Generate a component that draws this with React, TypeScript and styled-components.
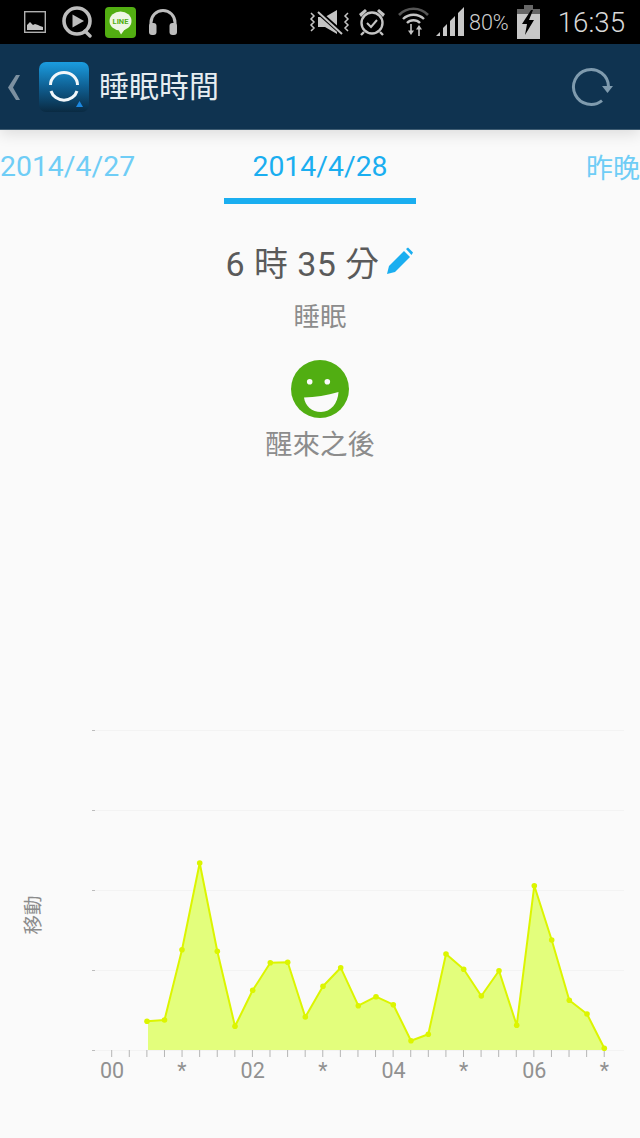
import React from "react";
import styled, { createGlobalStyle } from "styled-components";

const Global = createGlobalStyle`
  html, body { margin: 0; padding: 0; background: #fafafa; }
  * { box-sizing: border-box; }
`;

const CJK = `Roboto, "Noto Sans CJK TC", "Noto Sans CJK SC", sans-serif`;

const Screen = styled.div`
  width: 640px;
  height: 1138px;
  overflow: hidden;
  background: #fafafa;
  font-family: ${CJK};
  display: flex;
  flex-direction: column;
`;

const StatusBar = styled.div`
  height: 44px;
  background: #000;
  flex: none;
  display: flex;
  align-items: center;
  justify-content: space-between;
  padding: 0 15px 0 24px;
  color: #c4c4c4;
`;

const StatusGroup = styled.div`
  display: flex;
  align-items: center;
`;

const StatusIcon = styled.svg<{ $ml?: number }>`
  display: block;
  flex: none;
  margin-left: ${(p) => p.$ml ?? 0}px;
`;

const Percent = styled.span`
  font-size: 21.5px;
  font-weight: 300;
  margin-left: 4px;
  color: #d0d0d0;
`;

const Clock = styled.span`
  font-size: 27.7px;
  font-weight: 300;
  margin-left: 18px;
  color: #d8d8d8;
`;

const AppBar = styled.header`
  height: 86px;
  flex: none;
  background: #0f3350;
  border-bottom: 1px solid #3e5c72;
  display: flex;
  align-items: center;
  padding: 1px 10px 0 8px;
  box-shadow: 0 4px 14px rgba(0, 0, 0, 0.12);
  position: relative;
  z-index: 1;
`;

const BackChevron = styled.svg`
  display: block;
  flex: none;
`;

const AppIcon = styled.svg`
  display: block;
  margin-left: 19px;
  flex: none;
`;

const Title = styled.h1`
  margin: 0 0 0 10px;
  flex: 1;
  font-size: 30px;
  font-weight: 400;
  color: #e6edf1;
  line-height: 1;
`;

const RefreshIcon = styled.svg`
  display: block;
  flex: none;
  margin-right: 16px;
`;

const Tabs = styled.nav`
  display: grid;
  grid-template-columns: 1fr 192px 1fr;
  height: 74px;
  flex: none;
`;

const Tab = styled.div<{ $active?: boolean; $align?: string; $size?: number }>`
  display: flex;
  align-items: center;
  justify-content: ${(p) => p.$align ?? "center"};
  font-size: ${(p) => p.$size ?? 28.4}px;
  color: ${(p) => (p.$active ? "#1aaef0" : "#6fcdf6")};
  border-bottom: 6px solid ${(p) => (p.$active ? "#1aaef0" : "transparent")};
  padding-top: 5px;
`;

const Summary = styled.section`
  display: flex;
  flex-direction: column;
  align-items: center;
  flex: none;
  padding-top: 34px;
`;

const Duration = styled.div`
  display: flex;
  align-items: center;
  height: 46px;
  font-size: 34px;
  color: #5a5a5a;
  letter-spacing: 0.4px;
  white-space: nowrap;
`;

const Edit = styled.svg`
  display: block;
  margin-left: 7px;
`;

const Label = styled.div<{ $size: number; $mt: number }>`
  font-size: ${(p) => p.$size}px;
  line-height: 1.2;
  color: #8c8c8c;
  margin-top: ${(p) => p.$mt}px;
`;

const Smiley = styled.svg`
  display: block;
  margin-top: 27px;
`;

const Chart = styled.svg`
  display: block;
  margin-top: 259px;
  flex: none;
`;

const pts: [number, number][] = [
  [147, 1021.3], [164.5, 1020], [182, 949.7], [199.7, 863], [217.3, 951.3], [235, 1026.3],
  [252.7, 990.3], [270.3, 962.7], [287.7, 962.3], [305.3, 1017], [323, 986.3], [340.7, 967.7],
  [358.3, 1005.7], [376, 996.7], [393.3, 1004.7], [411, 1040.7], [428.3, 1034.3], [446, 954],
  [463.7, 969.3], [481.3, 996], [499, 970.7], [516.7, 1025.3], [534.3, 885.7], [551.7, 940],
  [569.3, 1000.3], [587, 1014], [604.3, 1048.3],
];
const OY = 720; // chart svg origin on the page
const gridYs = [730, 810, 890, 970, 1050];
const ticks = Array.from({ length: 29 }, (_, i) => 111.7 + i * 17.59);
const labels: [number, string][] = [
  [112, "00"], [182, "*"], [252.7, "02"], [323, "*"], [393.5, "04"], [463.7, "*"], [534.3, "06"], [604.3, "*"],
];

function SleepChart() {
  const line = pts.map(([x, y]) => `${x},${y - OY}`).join(" ");
  const area = `148,${1050 - OY} 148,${1021.3 - OY} ${pts.slice(1).map(([x, y]) => `${x},${y - OY}`).join(" ")} 604.3,${1050 - OY}`;
  return (
    <Chart width={640} height={370} viewBox="0 0 640 370">
      {gridYs.map((y) => (
        <g key={y}>
          <line x1={95} x2={624} y1={y - OY + 0.5} y2={y - OY + 0.5} stroke="#f3f3f3" strokeWidth={1} />
          <line x1={92} x2={95} y1={y - OY + 0.5} y2={y - OY + 0.5} stroke="#bdbdbd" strokeWidth={1} />
        </g>
      ))}
      <polygon points={area} fill="#e3fe7c" />
      {ticks.map((x) => (
        <line key={x} x1={x} x2={x} y1={330} y2={337} stroke="#b5b5b5" strokeWidth={1} />
      ))}
      <polyline points={line} fill="none" stroke="#dcf500" strokeWidth={2} strokeLinejoin="round" />
      {pts.map(([x, y]) => (
        <circle key={x} cx={x} cy={y - OY} r={2.8} fill="#dcf500" />
      ))}
      {labels.map(([x, t]) => (
        <text key={x} x={x} y={358} textAnchor="middle" fontFamily={CJK} fontSize={21.5} fill="#919191">
          {t}
        </text>
      ))}
      <text
        transform="translate(40 195) rotate(-90)"
        textAnchor="middle"
        fontFamily={CJK}
        fontSize={19.5}
        fill="#8c8c8c"
      >
        移動
      </text>
    </Chart>
  );
}

export default function App() {
  return (
    <Screen>
      <Global />
      <StatusBar>
        <StatusGroup>
          <StatusIcon width={22} height={22} viewBox="0 0 22 22">
            <rect x="0.7" y="0.7" width="20.6" height="20.6" fill="none" stroke="#b0b0b0" strokeWidth="1.4" />
            <path d="M3 19v-5l3-3 3 3 2-1 3 1 2 1 3 1v3z" fill="#c4c4c4" />
          </StatusIcon>
          <StatusIcon $ml={15} width={32} height={32} viewBox="0 0 32 32">
            <circle cx="16" cy="15" r="13" fill="none" stroke="#bdbdbd" strokeWidth="3.6" />
            <path d="M11.5 8.5 23 15l-11.5 6.5z" fill="#bdbdbd" />
            <path d="M24 25l5 5" stroke="#bdbdbd" strokeWidth="3.4" strokeLinecap="round" />
          </StatusIcon>
          <StatusIcon $ml={12} width={31} height={31} viewBox="0 0 31 31">
            <rect width="31" height="31" rx="4" fill="#52ae12" />
            <ellipse cx="15.5" cy="14" rx="11" ry="9.5" fill="#eef6e4" />
            <path d="M13 22l3 5.5 4-5.5z" fill="#eef6e4" />
            <text x="15.5" y="17" textAnchor="middle" fontFamily="Roboto, sans-serif" fontWeight="700" fontSize="7.5" fill="#52ae12">LINE</text>
          </StatusIcon>
          <StatusIcon $ml={12} width={30} height={28} viewBox="0 0 30 28">
            <path d="M3 19v-4.500a12 12 0 0 1 24 0V19" fill="none" stroke="#bdbdbd" strokeWidth="3" />
            <rect x="1" y="15" width="7.5" height="12" rx="3" fill="#bdbdbd" />
            <rect x="21.500" y="15" width="7.5" height="12" rx="3" fill="#bdbdbd" />
          </StatusIcon>
        </StatusGroup>
        <StatusGroup>
          <StatusIcon width={41} height={28} viewBox="0 0 41 28">
            <path d="M2 5l3 3-3 3 3 3-3 3 3 3-3 3M39 5l-3 3 3 3-3 3 3 3-3 3 3 3" fill="none" stroke="#c4c4c4" strokeWidth="1.5" />
            <path d="M9 9h7l12-7v24l-12-7H9z" fill="#c4c4c4" />
            <path d="M7 2l27 24" stroke="#000" strokeWidth="5" />
            <path d="M9 4l24 22" stroke="#c4c4c4" strokeWidth="2" />
          </StatusIcon>
          <StatusIcon $ml={7} width={30} height={30} viewBox="0 0 30 30">
            <circle cx="15" cy="16" r="10.5" fill="none" stroke="#c4c4c4" strokeWidth="2.4" />
            <path d="M10 16l4 4 6-7" fill="none" stroke="#c4c4c4" strokeWidth="2" />
            <path d="M2 7l6-5 2 2-6 6zM28 7l-6-5-2 2 6 6z" fill="#c4c4c4" />
            <path d="M7 25l-3 3M23 25l3 3" stroke="#c4c4c4" strokeWidth="2.4" />
          </StatusIcon>
          <StatusIcon $ml={11} width={31} height={32} viewBox="0 0 31 32">
            <path d="M1 9a20 20 0 0 1 29 0" fill="none" stroke="#555" strokeWidth="2.6" />
            <path d="M5 13a15 15 0 0 1 21 0M9 17a9 9 0 0 1 13 0" fill="none" stroke="#c4c4c4" strokeWidth="2.4" />
            <path d="M13 18v7" stroke="#c4c4c4" strokeWidth="1.6" />
            <path d="M10 24.500h6l-3 4.500z" fill="#c4c4c4" />
            <path d="M21 30v-7" stroke="#c4c4c4" strokeWidth="1.6" />
            <path d="M18 23.500h6l-3-4.500z" fill="#c4c4c4" />
          </StatusIcon>
          <StatusIcon $ml={6} width={30} height={30} viewBox="0 0 30 30">
            <path d="M1 29l4-4v4zM8 29v-8l4-4v12zM15 29V14l5-5v20zM23 29V6l6-6v29z" fill="#c8c8c8" />
          </StatusIcon>
          <Percent>80%</Percent>
          <StatusIcon $ml={8} width={23} height={34} viewBox="0 0 23 34">
            <rect x="7" y="0" width="9" height="4" fill="#666" />
            <rect x="0" y="4" width="23" height="5" fill="#666" />
            <rect x="0" y="9" width="23" height="25" fill="#c8c8c8" />
            <path d="M14 5 5 19h5l-2 11 9-15h-5l4-10z" fill="#000" />
          </StatusIcon>
          <Clock>16:35</Clock>
        </StatusGroup>
      </StatusBar>

      <AppBar>
        <BackChevron width={12} height={25} viewBox="0 0 12 25">
          <path d="M8 0h4L5 12.500 12 25H8L0 12.500z" fill="#7c90a0" />
        </BackChevron>
        <AppIcon width={50} height={50} viewBox="0 0 50 50">
          <defs>
            <linearGradient id="ai" x1="0" y1="0" x2="0" y2="1">
              <stop offset="0" stopColor="#1b9de0" />
              <stop offset="0.5" stopColor="#0f5f92" />
              <stop offset="1" stopColor="#0a2a42" />
            </linearGradient>
          </defs>
          <rect width="50" height="50" rx="7" fill="url(#ai)" />
          <path d="M11.500 23A13.500 12.500 0 0 1 38.500 23M12 29A13.500 12.500 0 0 0 38 29" fill="none" stroke="#f2f7fa" strokeWidth="3" />
          <path d="M44 45h-7l3.500-6z" fill="#1b87e0" />
        </AppIcon>
        <Title>睡眠時間</Title>
        <RefreshIcon width={44} height={44} viewBox="0 0 44 44">
          <path d="M32 35.600A17.500 17.500 0 1 1 38.500 21.500" fill="none" stroke="#7f9bae" strokeWidth="3" />
          <path d="M32 21h11l-5.500 7z" fill="#7f9bae" />
        </RefreshIcon>
      </AppBar>

      <Tabs>
        <Tab $align="flex-start">2014/4/27</Tab>
        <Tab $active>2014/4/28</Tab>
        <Tab $align="flex-end" $size={27}>昨晚</Tab>
      </Tabs>

      <Summary>
        <Duration>
          6 時 35 分
          <Edit width={28} height={28} viewBox="0 0 28 28">
            <path d="M1 27l2-8L18 4l6 6L9 25z" fill="#1aaef0" />
            <path d="M20 2l2-1.500 5 5L25.500 8z" fill="#1aaef0" />
          </Edit>
        </Duration>
        <Label $size={26.5} $mt={17}>睡眠</Label>
        <Smiley width={58} height={58} viewBox="0 0 58 58">
          <circle cx="29" cy="29" r="29" fill="#51ae12" />
          <circle cx="18.700" cy="21.700" r="2.800" fill="#fafafa" />
          <circle cx="36.300" cy="21.700" r="2.800" fill="#fafafa" />
          <path d="M13 37.500C24 37 36 35.500 47.500 32 47 43 40 52 30 52 21 52 14 46 13 37.500z" fill="#fafafa" />
        </Smiley>
        <Label $size={27.5} $mt={10}>醒來之後</Label>
      </Summary>

      <SleepChart />
    </Screen>
  );
}
